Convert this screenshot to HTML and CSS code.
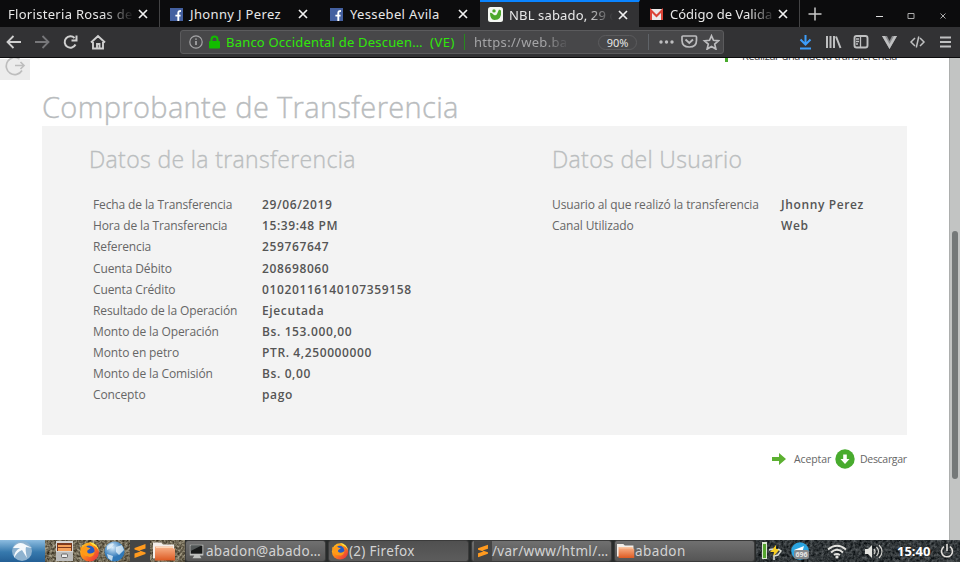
FILE: index.html
```html
<!DOCTYPE html>
<html lang="es">
<head>
<meta charset="utf-8">
<title>Comprobante de Transferencia</title>
<link rel="stylesheet" href="styles.css">
</head>
<body>
<svg width="0" height="0" class="defs" aria-hidden="true">
  <defs>
    <linearGradient id="flame" x1="0" y1="0" x2="1" y2="1"><stop offset="0" stop-color="#ffcf28"/><stop offset=".45" stop-color="#ff8a16"/><stop offset="1" stop-color="#e3204b"/></linearGradient>
    <linearGradient id="folder" x1="0" y1="0" x2="0" y2="1"><stop offset="0" stop-color="#f9b58c"/><stop offset="1" stop-color="#dd5a22"/></linearGradient>
    <radialGradient id="globe" cx=".4" cy=".3"><stop offset="0" stop-color="#d8ecfb"/><stop offset="1" stop-color="#2f78b8"/></radialGradient>
    <symbol id="i-close" viewBox="0 0 10 10"><path d="M1 1l8 8M9 1l-8 8" stroke="#f0f0f0" stroke-width="1.7"/></symbol>
    <symbol id="i-fb" viewBox="0 0 13 13"><path fill="#4460a0" d="M0 0h13v13H0z"/><path d="M8.300 13V7.500M5.400 7.600h5.200M8.300 8V4.700Q8.300 2.800 11 3.100" fill="none" stroke="#fff" stroke-width="1.900"/></symbol>
    <symbol id="i-firefox" viewBox="0 0 20 20"><circle cx="10" cy="10.500" r="9" fill="url(#flame)"/><path d="M10 1q8 1 9 9-2-5-6-6z" fill="#ffe340"/><circle cx="9.500" cy="9.500" r="5.300" fill="#245bc4"/><path d="M1 5q1 2 3 1 2-3 4 0l3 1-3 2q-1 3 3 3 2 0 4-2-1 6-6 5Q2 15 1 5z" fill="#ff9a18"/></symbol>
    <symbol id="i-sublime" viewBox="0 0 20 22"><path fill="#454545" d="M0 0h20v22H0z"/><path d="M4.500 8l11-4v4.500l-6 2 6 2v1.500l-11 4v-4.500l6-2-6-2z" fill="#ff9a1f"/></symbol>
    <symbol id="i-folder" viewBox="0 0 23 20"><path d="M0 1h8l2 2h11v14H0z" fill="#f3eee9"/><path d="M2 5h18v2h2v12H2z" fill="url(#folder)"/><path d="M3 6h17" stroke="#ffd5b5"/></symbol>
  </defs>
</svg>
<div class="screen">
  <header class="tabs">
    <div class="tab first"><span class="label fade t1">Floristeria Rosas de</span><svg class="close"><use href="#i-close"/></svg></div>
    <div class="tab"><svg class="fav"><use href="#i-fb"/></svg><span class="label t2">Jhonny J Perez</span><svg class="close"><use href="#i-close"/></svg></div>
    <div class="tab"><svg class="fav"><use href="#i-fb"/></svg><span class="label t3">Yessebel Avila</span><svg class="close"><use href="#i-close"/></svg></div>
    <div class="tab active"><svg class="fav nbl" viewBox="0 0 15 15"><rect width="15" height="15" rx="2.500" fill="#f4f7f2"/><path d="M2 6Q3 5 6 8q2 1 3-1l2-4.500 2 1Q14 13 6.500 13 2 12.500 2 6z" fill="#4ca82b"/><circle cx="6" cy="3.900" r="1.700" fill="#4ca82b"/></svg><span class="label fade t4">NBL sabado, 29 d</span><svg class="close"><use href="#i-close"/></svg></div>
    <div class="tab last"><svg class="fav" viewBox="0 0 13 13"><path fill="#eceaea" d="M0 1h13v11H0z"/><path d="M1 12V2.500L6.500 8 12 2.500V12" fill="none" stroke="#dc4437" stroke-width="2"/></svg><span class="label fade t5">Código de Valida</span><svg class="close"><use href="#i-close"/></svg></div>
    <svg class="plus" viewBox="0 0 14 14"><path d="M7 .5v13M.5 7h13" stroke="#c9c9c9" stroke-width="1.500"/></svg>
    <svg class="window" viewBox="0 0 72 10"><path d="M1 5.500h7" stroke="#ddd"/><path d="M33 2.500h6v5h-6z" fill="none" stroke="#aaa"/><path d="M65.500 2.500l5 5m0-5l-5 5" stroke="#aaa"/></svg>
  </header>
  <nav class="toolbar">
    <svg class="nav" viewBox="0 0 110 18" fill="none" stroke="#d0d0d0" stroke-width="1.800"><path d="M15 9H1.500M7.500 3L1.500 9l6 6"/><path stroke="#77777a" d="M29 9h13.500M36.500 3l6 6-6 6"/><path d="M69.500 11.500A5.700 5.700 0 1 1 68.500 5M70.500 2.500v5h-5" stroke-width="2"/><path d="M85 9.500L92 3l7 6.500M87 9v6.500h10V9M91 15v-4h2.500v4" stroke-width="1.900"/></svg>
    <div class="address">
      <svg class="secure" viewBox="0 0 34 16"><circle cx="7" cy="8" r="6.200" fill="none" stroke="#a5a5a7" stroke-width="1.200"/><path d="M7 7v4M7 4.500v1.300" stroke="#b5b5b7" stroke-width="1.500"/><path d="M22.500 8V5.500q0-3 3-3t3 3V8" fill="none" stroke="#12bc00" stroke-width="2"/><rect x="20" y="7" width="11" height="7.500" rx="1" fill="#12bc00"/></svg>
      <span class="bank">Banco Occidental de Descuen…</span><span class="country">(VE)</span>
      <i class="sep green"></i><span class="url">https://web.ba</span><span class="zoom">90%</span><i class="sep"></i>
      <svg class="actions" viewBox="0 0 62 16"><g fill="#bdbdbf"><circle cx="3" cy="8" r="1.700"/><circle cx="8.500" cy="8" r="1.700"/><circle cx="14" cy="8" r="1.700"/></g><g fill="none" stroke="#bdbdbf" stroke-width="1.700"><path d="M25 2h12.500q1 0 1 1v3.500q0 6.500-7.200 6.500T24 6.500V3q0-1 1-1z"/><path d="M27.500 5.500l3.800 3.500L35 5.500" stroke-width="1.900"/><path d="M53.500 1.800l2 4.500 5 .5-3.800 3.300 1.200 5-4.400-2.600-4.400 2.600 1.200-5-3.800-3.300 5-.5z"/></g></svg>
    </div>
    <svg class="tools" viewBox="0 0 156 18" fill="none" stroke="#bfc0c1" stroke-width="1.900"><path d="M6.500 2v9M1.500 6.500l5 5 5-5M1 15.500h11" stroke="#3d9dfa" stroke-width="2"/><path d="M28 3v12M31.500 3v12M35 3v12M37 3.500L41.500 15" stroke-width="2"/><rect x="55.500" y="3" width="13" height="11.500" rx="2"/><path d="M61.500 3v11M57 6h3M57 8.500h3M57 11h2" stroke-width="1.300"/><path d="M83 3h5l2.500 5L93 3h5l-7.500 13z" fill="#88898b" stroke="none"/><path d="M83 3h3l4.500 8L95 3h3l-7.500 13z" fill="#bfc0c1" stroke="none"/><path d="M116 5l-4 4 4 4M121 5l4 4-4 4M119.800 3.500l-2.500 11" stroke-width="1.500"/><path d="M141 4.500h11M141 9h11M141 13.500h11"/></svg>
  </nav>
  <main class="page">
    <div class="content">
      <div class="top"><svg class="exit" viewBox="0 0 30 22"><path fill="#ececec" d="M0 1h30v21H0z"/><path d="M19.500 1A8.500 8.500 0 1 0 22 12.500M15 7.500h9M20.500 4l3.500 3.500-3.500 3.500" fill="none" stroke="#bdbdbd" stroke-width="1.700"/></svg><div class="again"><i></i><span>Realizar una nueva transferencia</span></div></div>
      <h1>Comprobante de Transferencia</h1>
      <section class="receipt">
        <div class="transfer">
          <h2>Datos de la transferencia</h2>
          <dl>
            <dt>Fecha de la Transferencia</dt><dd>29/06/2019</dd>
            <dt>Hora de la Transferencia</dt><dd>15:39:48 PM</dd>
            <dt>Referencia</dt><dd>259767647</dd>
            <dt>Cuenta Débito</dt><dd>208698060</dd>
            <dt>Cuenta Crédito</dt><dd>01020116140107359158</dd>
            <dt>Resultado de la Operación</dt><dd>Ejecutada</dd>
            <dt>Monto de la Operación</dt><dd>Bs. 153.000,00</dd>
            <dt>Monto en petro</dt><dd>PTR. 4,250000000</dd>
            <dt>Monto de la Comisión</dt><dd>Bs. 0,00</dd>
            <dt>Concepto</dt><dd>pago</dd>
          </dl>
        </div>
        <div class="user">
          <h2>Datos del Usuario</h2>
          <dl>
            <dt>Usuario al que realizó la transferencia</dt><dd>Jhonny Perez</dd>
            <dt>Canal Utilizado</dt><dd>Web</dd>
          </dl>
        </div>
      </section>
      <div class="buttons">
        <svg class="arrow" viewBox="0 0 14 12"><path d="M0 4h7V0l7 6-7 6V8H0z" fill="#5cb031"/></svg><span class="accept">Aceptar</span>
        <svg class="download" viewBox="0 0 20 20"><circle cx="10" cy="10" r="9.700" fill="#48ab2e"/><path d="M8.200 5.500h3.600v4.500h2.700l-4.500 5-4.500-5h2.700z" fill="#fff"/></svg><span class="save">Descargar</span>
      </div>
    </div>
    <div class="scroll"><i></i></div>
  </main>
  <footer class="taskbar">
    <div class="start"><svg viewBox="0 0 22 22"><circle cx="11" cy="11" r="10" fill="#8eb2cf"/><path d="M2 8Q8 0 15 5l6 3-6-1q-1 3 1 11l-5-8q-5 2-8 8 0-7 6-10z" fill="#f5f9fc"/></svg></div>
    <div class="launch">
      <svg class="noise"><filter id="n1" color-interpolation-filters="sRGB"><feTurbulence type="fractalNoise" baseFrequency=".4" numOctaves="3"/><feColorMatrix values=".8 0 0 0 .04  .8 0 0 0 .01  .75 0 0 0 -.04  0 0 0 0 1"/></filter><rect width="100%" height="100%" filter="url(#n1)"/></svg>
      <svg class="li cab" viewBox="0 0 20 21"><path fill="#d6d6d4" d="M1 0h17v20H1z"/><path fill="#7d3a1e" d="M2 2h15v8H2z"/><path fill="#f5a15a" d="M3 4h13v2H3zM3 7h13v3H3z"/><path fill="#bcbcbb" d="M1 11h17v9H1z"/><rect x="6.500" y="13" width="6" height="3.500" rx="1" fill="#eee" stroke="#666"/></svg>
      <svg class="li"><use href="#i-firefox"/></svg>
      <svg class="li" viewBox="0 0 21 21"><circle cx="10.500" cy="10.500" r="10" fill="url(#globe)"/><path d="M3 5q5-4 7-2l-3 4-4 2zM12 6l6-2 2 5-5 5-3-3zM3 13l6 2-1 5-4-3z" fill="#eaf5fc" opacity=".75"/></svg>
      <svg class="li sub"><use href="#i-sublime"/></svg>
      <svg class="li last-li"><use href="#i-folder"/></svg>
    </div>
    <div class="tasks">
      <div class="task"><svg viewBox="0 0 20 20"><path fill="#bfc1bf" d="M2 3h15v12H2zM7 15h6l2 3H5z"/><path fill="#171919" d="M3 4h13v9H3z"/><path fill="#535858" d="M3 4h12L3 10z"/></svg><span class="k1">abadon@abado…</span></div>
      <div class="task down"><svg><use href="#i-firefox"/></svg><span class="k2">(2) Firefox</span></div>
      <div class="task"><svg><use href="#i-sublime"/></svg><span class="k3">/var/www/html/…</span></div>
      <div class="task"><svg><use href="#i-folder"/></svg><span class="k4">abadon</span></div>
    </div>
    <div class="tray">
      <svg class="noise"><filter id="n2" color-interpolation-filters="sRGB"><feTurbulence type="fractalNoise" baseFrequency=".35" numOctaves="3"/><feColorMatrix values=".5 0 0 0 -.06  .5 0 0 0 -.04  .5 0 0 0 -.03  0 0 0 0 1"/></filter><rect width="100%" height="100%" filter="url(#n2)"/></svg>
      <svg class="status" viewBox="0 0 136 22"><path fill="#d9e6d1" d="M6 2h5v17H6z"/><path fill="#55a52f" d="M7 4h3v14H7z"/><path d="M20 5l-6 7h4l-1 5 7-8h-4z" fill="#f7ce24"/><path d="M13 10l4-1M22 9l3 2-3 4-4 1v4" fill="none" stroke="#d9dcd6" stroke-width="1.500"/><circle cx="44" cy="11" r="8.800" fill="#2ca5e0"/><path d="M38 10l10-4-2 7-3-2-2 1z" fill="#fff"/><rect x="38" y="10" width="15" height="9" rx="2" fill="#85898c"/><text x="45.500" y="17.400" class="badge">696</text><g fill="none" stroke="#e3e3df" stroke-width="2"><path d="M72 9.500Q81 2 90 9.500M75 12.500Q81 7 87 12.500M78 15Q81 13 84 15"/></g><circle cx="81" cy="17" r="1.600" fill="#e3e3df"/><path d="M109 9h3l4-4v13l-4-4h-3z" fill="#e3e3df"/><path d="M118 9q2 2.500 0 5M120.500 7q4 4.500 0 9M123 5q6 6.500 0 13" fill="none" stroke="#d0d0cc" stroke-width="1.300"/></svg>
      <span class="clock">15:40</span>
      <svg class="power" viewBox="0 0 14 14"><path d="M4 2.700a5.500 5.500 0 1 0 6 0M7 0v7" fill="none" stroke="#e3e0dc" stroke-width="1.600"/></svg>
    </div>
  </footer>
</div>
</body>
</html>
```
FILE: styles.css
```css
* { box-sizing: border-box; }
body { margin: 0; overflow: hidden; font-family: "Open Sans", sans-serif; }
.defs { position: absolute; }
svg { flex: none; display: block; }
.screen { width: 960px; height: 562px; display: flex; flex-direction: column; background: #fff; }
.tabs, .toolbar, .address, .task, .tray, .launch, .buttons { display: flex; align-items: center; }
.tabs { height: 27px; background: #0c0c0d; color: #e8e8e8; font: 13px "Noto Sans", sans-serif; letter-spacing: .35px; }
.tab { width: 160px; height: 27px; display: flex; align-items: center; padding: 1px 11px 0 10px; border-right: 1px solid #0c0c0d; }
.first { padding-left: 8px; }
.first, .last { border-right-color: #434344; }
.active { background: #323234; border-top: 2px solid #0a84ff; padding-top: 0; padding-left: 8px; }
.fav { width: 13px; height: 13px; margin-right: 7px; }
.nbl { width: 15px; height: 15px; margin-right: 6px; }
.label { white-space: nowrap; }
.fade { -webkit-mask-image: linear-gradient(to right, #000 75%, transparent); }
.t1 { width: 126px; letter-spacing: .3px; }
.t4 { width: 104px; letter-spacing: .15px; }
.t5 { width: 106px; letter-spacing: 0; }
.close { width: 10px; height: 10px; margin-left: auto; }
.plus { width: 14px; height: 14px; margin-left: 8px; }
.window { width: 72px; height: 10px; margin: 4px 0 0 53px; }
.toolbar { height: 31px; background: #323234; border-bottom: 1px solid #0c0c0d; }
.nav { width: 110px; height: 18px; margin-left: 6px; }
.address { width: 544px; height: 24px; margin-left: 64px; padding-left: 8px; background: #474749; border: 1px solid #5b5b5d; border-radius: 3px; font: 13px "Noto Sans", sans-serif; white-space: nowrap; }
.secure { width: 34px; height: 16px; }
.bank, .country { color: #30e60b; }
.bank { width: 204px; margin-left: 3px; letter-spacing: .2px; }
.country { width: 27px; letter-spacing: .5px; }
.sep { width: 1px; height: 16px; background: #5f6368; }
.sep.green { background: #278a1d; margin: 0 9px 0 7px; }
.url { width: 95px; color: #a5a5a7; letter-spacing: .3px; -webkit-mask-image: linear-gradient(to right, #000 75%, transparent); }
.zoom { width: 39px; height: 15px; margin: 0 11px 0 29px; border: 1px solid #5b5b5d; border-radius: 8px; text-align: center; font-size: 11px; line-height: 13px; color: #e6e6e6; }
.actions { width: 62px; height: 16px; margin-left: 9px; }
.tools { width: 156px; height: 18px; margin-left: 75px; }
.page { height: 482px; display: flex; }
.content { width: 949px; }
.top { height: 22px; display: flex; overflow: hidden; }
.exit { width: 30px; height: 22px; }
.again { display: flex; margin-left: 695px; font-size: 11px; line-height: 14px; height: 14px; color: #444; margin-top: -9px; letter-spacing: -.4px; white-space: nowrap; }
.again i { width: 3px; height: 13px; background: #48ab2e; margin-right: 14px; }
h1, h2, dl, dd { margin: 0; font-weight: 400; }
h1 { height: 46px; margin-left: 42px; padding-top: 7px; font-size: 29px; line-height: 40px; color: #b9bcbe; font-weight: 300; letter-spacing: .35px; -webkit-text-stroke: .4px #b9bcbe; white-space: nowrap; }
.receipt { display: flex; width: 865px; height: 309px; margin-left: 42px; background: #f3f3f3; }
.transfer { width: 510px; padding-left: 47px; }
h2 { height: 68px; padding-top: 17px; font-size: 23px; line-height: 32px; color: #bbbebf; font-weight: 300; letter-spacing: .35px; -webkit-text-stroke: .35px #bbbebf; white-space: nowrap; }
dl { padding-top: .4px; display: grid; grid-template-columns: 169px 1fr; grid-auto-rows: 21.050px; font-size: 12px; line-height: 21px; color: #666; white-space: nowrap; }
dt { letter-spacing: -.12px; }
.transfer dl { margin-left: 4px; }
.user dl { grid-template-columns: 229px 1fr; }
dd { font-weight: 600; color: #555; letter-spacing: .62px; }
.buttons { width: 907px; height: 20px; margin-top: 14px; justify-content: flex-end; font-size: 10.500px; color: #666; white-space: nowrap; }
.arrow { width: 14px; height: 12px; margin-right: 8px; }
.accept { width: 37px; letter-spacing: -.1px; }
.download { width: 20px; height: 20px; margin: 0 5px 0 4px; }
.save { width: 47px; letter-spacing: -.3px; }
.scroll { width: 11px; background: #c2c4c3; border-left: 1px solid #adafae; padding: 173px 0 0 2px; }
.scroll i { display: block; width: 6px; height: 248px; border-radius: 3px; background: #747878; }
.taskbar { height: 22px; display: flex; background: #282b2b; }
.start { width: 45px; background: linear-gradient(#8dbce0, #3679ad 55%, #245f95); padding-left: 11px; }
.start svg { width: 22px; height: 22px; }
.launch { width: 140px; padding-left: 10px; gap: 4px; position: relative; overflow: hidden; }
.noise { position: absolute; left: 0; top: 0; width: 100%; height: 22px; }
.li { position: relative; width: 21px; height: 21px; }
.cab { width: 20px; }
.sub { width: 22px; height: 22px; margin-right: -2px; }
.last-li { width: 23px; }
.tasks { width: 571px; display: flex; gap: 2px; }
.task { width: 141px; height: 22px; padding-left: 2px; background: linear-gradient(#707070, #555); border: 1px solid #3b3b3b; border-radius: 3px; color: #d3d3d3; font: 13.500px "Noto Sans", sans-serif; letter-spacing: .3px; white-space: nowrap; }
.k4 { letter-spacing: .4px; }
.down { background: linear-gradient(#505050, #5c5c5c); }
.task svg { width: 18px; height: 20px; }
.tray { width: 204px; position: relative; overflow: hidden; }
.status { position: relative; width: 136px; height: 22px; }
.badge { font: 700 7px "Noto Sans", sans-serif; fill: #e5e5e5; text-anchor: middle; }
.clock { position: relative; width: 40px; margin-left: 5px; color: #fff; font: 700 13px "Noto Sans", sans-serif; }
.power { position: relative; width: 14px; height: 14px; margin-left: 3px; }
```
